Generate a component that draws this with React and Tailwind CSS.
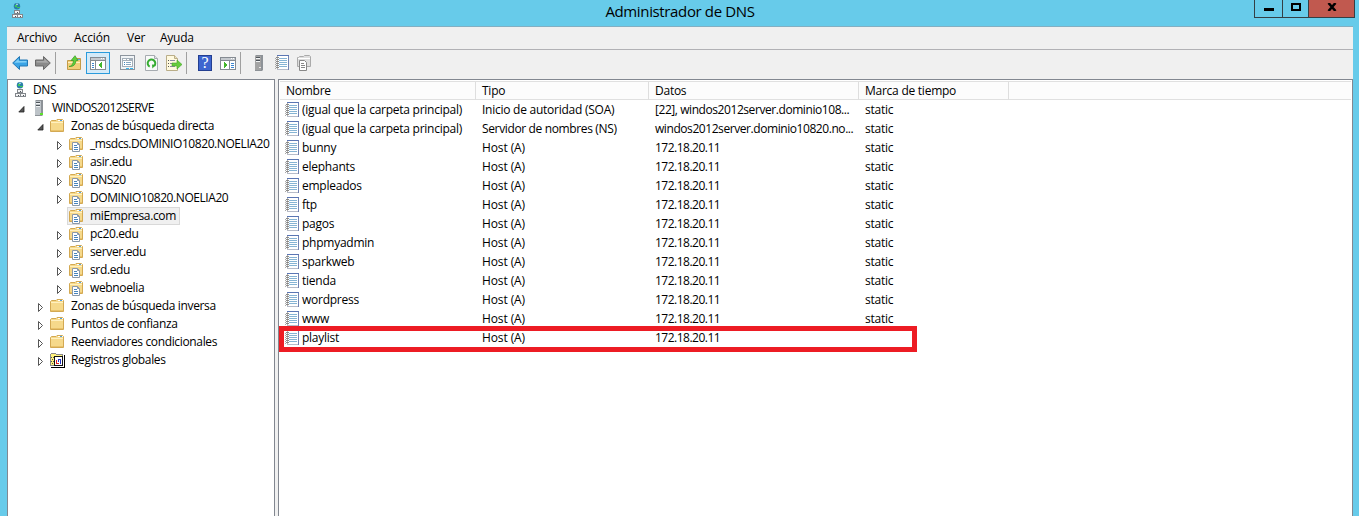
import React from "react";

const Svg = ({ className = "", children, w = 16, h = 16 }) => (
  <svg width={w} height={h} viewBox={`0 0 ${w} ${h}`} className={`block shrink-0 ${className}`}>
    {children}
  </svg>
);

const DnsIcon = () => (
  <Svg>
    <circle cx="7" cy="3.200" r="3.200" fill="#2a7fa8" />
    <path d="M5 2h2v2H5zM7 4h3v1H7z" fill="#3fc75a" />
    <path d="M6 0.800h2v1H6z" fill="#b8e4f5" />
    <g shapeRendering="crispEdges">
      <path d="M4 7h6v4H4zM2 11h6v4H2zM7 11h6v4H7z" fill="#83878c" />
      <path d="M5 8h4v2H5zM3 12h4v2H3zM8 12h4v2H8z" fill="#f4f5f6" />
      <path d="M7 9h1v1H7zM5 13h1v1H5zM10 13h1v1h-1z" fill="#50555a" />
    </g>
  </Svg>
);

const ServerIcon = ({ light }) => (
  <Svg>
    <path d="M4 1l1-1h7v15l-1 1H4z" fill="#8d9297" />
    <path d="M4 1h6v14H4z" fill={light ? "#bdc3c8" : "#a3a3a3"} />
    <path d="M5 2h4v1H5zM5 5h4v1H5z" fill="#4f555b" />
    <path d="M5 3h4v1H5zM5 6h4v1H5z" fill="#f2f4f5" />
    {light ? <path d="M9 13h3v2H9z" fill="#5ee02c" /> : <path d="M8 12h2v1H8z" fill="#e8e8e8" />}
  </Svg>
);

const FolderBody = () => (
  <>
    <path d="M1.500 3.500L2.500 2.500H7L8 1.500H13.500L14.500 2.500V13.500H1.500z" fill="#f6d98b" stroke="#d3a953" />
    <path d="M2 4.500h12" stroke="#fff0bf" />
    <path d="M9 2h5v1H9z" fill="#fff" />
    <path d="M11 2h2v1h-2z" fill="#519fe0" />
    <path d="M2 12h12v1H2z" fill="#e9c26b" />
  </>
);

const FolderIcon = () => (
  <Svg><FolderBody /></Svg>
);

const ZoneIcon = () => (
  <Svg>
    <FolderBody />
    <path d="M4.500 6.500h5l2 2v7h-7z" fill="#fff" stroke="#8b98a8" />
    <path d="M9.500 6.500v2h2" fill="none" stroke="#8b98a8" />
    <path d="M6 9h3v1H6zM6 11h4v1H6zM6 13h4v1H6z" fill="#4784bd" />
  </Svg>
);

const LogsIcon = () => (
  <Svg>
    <g shapeRendering="crispEdges">
      <path d="M1 2h1V1h5v1h7v12H1z" fill="#8a8a8a" />
      <path d="M2 2h5v1h6v10H2z" fill="#fff27a" />
      <path d="M15 3h1v13H2v-1h13z" fill="#000" />
      <path d="M5 5h9v9H5z" fill="#fff" />
      <path d="M5 4h9v1H5zM5 5h1v9H5zM13 5h1v9h-1zM5 13h9v1H5z" fill="#111" />
      <path d="M2 5h1v1H2zM4 5h1v1H4zM3 7h1v1H3zM2 9h1v1H2zM4 9h1v1H4zM3 11h1v1H3z" fill="#555" />
      <path d="M7 8h1v4H7zM8 11h2v1H8z" fill="#e02020" />
      <path d="M9 7h3v1H9zM11 8h1v4h-1zM9 8h1v2H9z" fill="#2035c8" />
    </g>
  </Svg>
);

const RecordIcon = () => (
  <Svg>
    <g shapeRendering="crispEdges">
      <path d="M3 1h12v14H3z" fill="#fff" />
      <path d="M3 0h12v1H3z" fill="#5b76b4" />
      <path d="M14 1h1v14h-1z" fill="#7182b2" />
      <path d="M3 14h11v1H3z" fill="#b7bcc9" />
      <path d="M3 1h1v13H3z" fill="#b0b0b0" />
      <path d="M5 3h8v1H5zM5 5h8v1H5zM5 7h8v1H5zM5 9h8v1H5zM5 11h8v1H5z" fill="#86b4d4" />
      <path d="M2 2h3v1H2zM2 4h3v1H2zM2 6h3v1H2zM2 8h3v1H2zM2 10h3v1H2zM2 12h3v1H2z" fill="#8a8a8a" />
      <path d="M1 3h1v1H1zM1 5h1v1H1zM1 7h1v1H1zM1 9h1v1H1zM1 11h1v1H1zM1 13h1v1H1z" fill="#aaa" />
    </g>
  </Svg>
);

const BackIcon = () => (
  <Svg>
    <path d="M0.700 8L7.500 1.500V5H15.500V11H7.500V14.500z" fill="#3aa4e6" stroke="#2478b5" />
    <path d="M2.300 7.800L6.700 3.700V6H14.500V7.500z" fill="#82d0f7" />
  </Svg>
);

const ForwardIcon = () => (
  <Svg>
    <path d="M15.300 8L8.500 1.500V5H0.500V11H8.500V14.500z" fill="#8a8a8a" stroke="#686868" />
    <path d="M13.700 7.800L9.300 3.700V6H1.500V7.500z" fill="#aaa" />
  </Svg>
);

const UpIcon = () => (
  <Svg>
    <path d="M1.500 5.500H7L8 3.500h6.500v11h-13z" fill="#f2cf78" stroke="#c39a48" />
    <path d="M2 7h12v1H2z" fill="#fff0bd" />
    <path d="M11 4h3v1h-3z" fill="#62a4d8" />
    <path d="M3 11.500Q7 11 7.500 5.500H5L9 0.700L12 5.500H10Q9.500 12 3 11.500z" fill="#5fd13b" stroke="#3a9a26" strokeWidth=".7" />
  </Svg>
);

const PaneIcon = ({ right }) => (
  <Svg>
    <g shapeRendering="crispEdges">
      <path d="M0 2h16v13H0z" fill="#858b92" />
      <path d="M1 3h14v2H1z" fill="#c5c9ce" />
      <path d="M11 3h1v1h-1zM13 3h1v1h-1z" fill="#fff" />
      <path d="M1 6h14v8H1z" fill="#fff" />
      {right ? (
        <>
          <path d="M9 6h1v8H9z" fill="#858b92" />
          <path d="M11 8h3v1h-3zM11 10h3v1h-3zM11 12h3v1h-3z" fill="#3e87d0" />
          <path d="M4 7h1v1h1v1h1v2H6v1H5v1H4z" fill="#43b62c" />
        </>
      ) : (
        <>
          <path d="M5 6h1v8H5z" fill="#858b92" />
          <path d="M2 8h2v1H2zM2 10h2v1H2zM2 12h2v1H2z" fill="#3e87d0" />
          <path d="M11 7h1v6h-1v-1h-1v-1H9V9h1V8h1z" fill="#43b62c" />
        </>
      )}
    </g>
  </Svg>
);

const PropertiesIcon = () => (
  <Svg>
    <g shapeRendering="crispEdges">
      <path d="M1 0h15v15H1z" fill="#8d959e" />
      <path d="M2 1h13v13H2z" fill="#f1f4f6" />
      <path d="M3 3h11v9H3z" fill="#a4afb9" />
      <path d="M4 4h3v1H4zM8 4h2v1H8zM4 6h9v5H4z" fill="#fff" />
      <path d="M5 7h1v1H5zM5 9h1v1H5z" fill="#3c83ba" />
      <path d="M7 7h5v1H7zM7 9h5v1H7z" fill="#85a7c2" />
      <path d="M7 13h3v1H7zM11 13h3v1h-3z" fill="#35b4ed" />
    </g>
  </Svg>
);

const RefreshIcon = () => (
  <Svg>
    <path d="M1.500 0.500h9l3 3v12h-12z" fill="#f8faf8" stroke="#a6abb0" />
    <path d="M10.500 0.500v3h3" fill="#dfe3e6" stroke="#a6abb0" />
    <path d="M5.700 11.700A3.800 3.800 0 1 1 10.200 11" fill="none" stroke="#35ac30" strokeWidth="2" />
    <path d="M8 9.500L12 9.800L8.400 13.500z" fill="#35ac30" />
  </Svg>
);

const ExportIcon = () => (
  <Svg>
    <path d="M0.500 0.500h8l3 3v12h-11z" fill="#fff9df" stroke="#b9ad88" />
    <path d="M8.500 0.500v3h3" fill="#f0e5b9" stroke="#b9ad88" />
    <path d="M2 5h1v1H2zM2 8h1v1H2zM2 11h1v1H2z" fill="#555" />
    <path d="M4 5h5v1H4zM4 8h4v1H4zM4 11h5v1H4z" fill="#8b88a5" />
    <path d="M6 8h5V5l5 4.500L11 14v-3H6z" fill="#65cb3d" stroke="#43a62a" strokeWidth=".6" />
  </Svg>
);

const HelpIcon = () => (
  <div className="flex h-4 w-[14px] shrink-0 items-center justify-center border border-[#243f91] bg-[#3d65cf] font-['Liberation_Serif',serif] text-[16px] leading-none text-white">
    ?
  </div>
);

const ZonesGrayIcon = () => (
  <Svg>
    <path d="M1.500 2.500h1l1-1h4l1-1h5l1 1v10h-13z" fill="#dedede" stroke="#aaa" />
    <path d="M2 3.500h12" stroke="#fff" />
    <path d="M3.500 5.500h5l2 2v8h-7z" fill="#fff" stroke="#888" />
    <path d="M5 8h3v1H5zM5 10h4v1H5zM5 12h4v1H5z" fill="#888" />
  </Svg>
);

const Divider = () => <div className="-mt-px ml-1 h-[22px] w-px shrink-0 bg-[#a0a0a0]" />;

const Expander = ({ open }) => (
  <Svg w={7} h={10}>
    {open ? (
      <path d="M6 2.500V8H0.800z" fill="#555" stroke="#222" strokeWidth=".8" />
    ) : (
      <path d="M1.500 1.500L5.500 5.500L1.500 9.500z" fill="#fff" stroke="#555" />
    )}
  </Svg>
);

const indents = ["pl-[5px]", "pl-[10px]", "pl-[29px]", "pl-12"];
const treeIcons = { dns: DnsIcon, server: () => <ServerIcon light />, folder: FolderIcon, zone: ZoneIcon, logs: LogsIcon };

const tree = [
  [0, "dns", "DNS", null],
  [1, "server", "WINDOS2012SERVE", true, "tracking-[-0.55px]"],
  [2, "folder", "Zonas de búsqueda directa", true],
  [3, "zone", "_msdcs.DOMINIO10820.NOELIA20", false, "tracking-[-0.43px]"],
  [3, "zone", "asir.edu", false],
  [3, "zone", "DNS20", false, "tracking-[-0.5px]"],
  [3, "zone", "DOMINIO10820.NOELIA20", false, "tracking-[-0.43px]"],
  [3, "zone", "miEmpresa.com", null],
  [3, "zone", "pc20.edu", false],
  [3, "zone", "server.edu", false],
  [3, "zone", "srd.edu", false],
  [3, "zone", "webnoelia", false],
  [2, "folder", "Zonas de búsqueda inversa", false],
  [2, "folder", "Puntos de confianza", false],
  [2, "folder", "Reenviadores condicionales", false],
  [2, "logs", "Registros globales", false],
];

function TreeRow({ level, icon, label, open, tracking = "tracking-[-0.35px]" }) {
  const Icon = treeIcons[icon];
  const selected = label === "miEmpresa.com";
  return (
    <div className={`flex h-[18px] items-center ${indents[level]}`}>
      {level > 0 && (
        <div className={`flex shrink-0 items-center pt-0.5 ${level > 1 ? "w-3" : "w-[13px]"}`}>{open !== null && <Expander open={open} />}</div>
      )}
      <div className={`flex h-[18px] items-center ${selected ? "-ml-px w-[113px] bg-[#f0f0f0] outline outline-1 -outline-offset-1 outline-[#d9d9d9]" : ""}`}>
        <div className={selected ? "ml-px" : ""}><Icon /></div>
        <span className={`whitespace-nowrap ${level === 0 ? "ml-1" : level === 1 ? "ml-[5px]" : "ml-[6px]"} ${tracking}`}>{label}</span>
      </div>
    </div>
  );
}

const host = (name, stamp = "static") => [name, "Host (A)", "172.18.20.11", stamp];
const records = [
  ["(igual que la carpeta principal)", "Inicio de autoridad (SOA)", "[22], windos2012server.dominio108...", "static"],
  ["(igual que la carpeta principal)", "Servidor de nombres (NS)", "windos2012server.dominio10820.no...", "static"],
  ...["bunny", "elephants", "empleados", "ftp", "pagos", "phpmyadmin", "sparkweb", "tienda", "wordpress", "www"].map((n) => host(n)),
  host("playlist", ""),
];

const columns = "grid grid-cols-[195px_173px_210px_150px]";

export default function App() {
  return (
    <div className="flex h-[516px] w-[1359px] flex-col overflow-hidden bg-[#67cbea] font-['Open_Sans','Noto_Sans',sans-serif] text-[12px] leading-[18px] tracking-[-0.25px] text-black">
      <header className="flex h-[26px] shrink-0">
        <div className="w-[200px] pt-[3px] pl-[10px]"><DnsIcon /></div>
        <h1 className="flex-1 pt-[2px] pr-[94px] text-center text-[15px] font-normal tracking-[-0.36px]">Administrador de DNS</h1>
        <div className="mr-1 flex h-[18px] w-[101px] border-x border-b border-[#343f45]">
          <div className="flex w-[28px] justify-center border-r border-[#343f45] pt-2"><div className="h-[3px] w-[10px] bg-black" /></div>
          <div className="flex w-[26px] justify-center border-r border-[#343f45] pt-[3px]"><div className="h-2 w-[10px] border-2 border-black" /></div>
          <div className="flex flex-1 justify-center bg-[#c1594f] pt-[3px]">
            <Svg w={10} h={8}><path d="M1.500 0L8.500 8M8.500 0L1.500 8" stroke="#000" strokeWidth="2.500" /></Svg>
          </div>
        </div>
      </header>

      <main className="mr-[6px] ml-[7px] flex min-h-0 flex-1 flex-col border-t border-[#83afc2] bg-[#f0f0f0]">
        <nav className="flex h-[23px] shrink-0 border-b border-[#b1b1b5] pt-[2px] pl-[10px]">
          <span className="w-[57px]">Archivo</span>
          <span className="w-[53px] tracking-[-0.1px]">Acción</span>
          <span className="w-[33px]">Ver</span>
          <span>Ayuda</span>
        </nav>
        <div className="flex h-[29px] shrink-0 items-center pb-[3px] pl-[5px]">
          <BackIcon />
          <div className="ml-[7px]"><ForwardIcon /></div>
          <Divider />
          <div className="ml-[10px]"><UpIcon /></div>
          <div className="ml-1 flex h-[22px] w-6 items-center justify-center border border-[#2a9bdc] bg-[#d4eaf8]"><PaneIcon /></div>
          <div className="ml-[9px]"><PropertiesIcon /></div>
          <div className="ml-[9px]"><RefreshIcon /></div>
          <div className="ml-[6px]"><ExportIcon /></div>
          <Divider />
          <div className="mr-px ml-[11px]"><HelpIcon /></div>
          <div className="ml-[7px]"><PaneIcon right /></div>
          <Divider />
          <div className="ml-[10px]"><ServerIcon /></div>
          <div className="ml-[7px]"><RecordIcon /></div>
          <div className="ml-[6px]"><ZonesGrayIcon /></div>
        </div>

        <div className="flex min-h-0 flex-1">
          <aside className="w-[268px] shrink-0 border-x border-t border-[#828790] bg-white pt-px">
            {tree.map(([level, icon, label, open, tracking]) => (
              <TreeRow key={label} level={level} icon={icon} label={label} open={open} tracking={tracking} />
            ))}
          </aside>
          <section className="ml-[3px] flex-1 border-x border-t border-[#828790] bg-white">
            <div className="mx-px mt-px h-[19px] border-t border-b border-[#e0e0e0] bg-[#fcfcfc]">
              <div className="grid h-full w-[729px] grid-cols-[196px_173px_210px_150px] leading-[18px]">
                {["Nombre", "Tipo", "Datos", "Marca de tiempo"].map((title) => (
                  <div key={title} className="-ml-px border-r border-[#dedede] pl-[7px]">{title}</div>
                ))}
              </div>
            </div>
            <div className="pt-px">
              {records.map(([name, type, data, stamp], i) => (
                <div key={i} className={`${columns} relative h-[19px] w-[730px] pl-px leading-[17px]`}>
                  <div className="flex pl-1">
                    <div className="pt-px"><RecordIcon /></div>
                    <span className="ml-[2px] whitespace-nowrap">{name}</span>
                  </div>
                  <div className={`pl-[7px] whitespace-nowrap ${type.includes("NS") ? "tracking-[-0.36px]" : type.includes("Host") ? "tracking-[-0.1px]" : ""}`}>{type}</div>
                  <div className={`pl-[7px] whitespace-nowrap ${data.length < 15 ? "tracking-[-0.5px]" : "tracking-[-0.43px]"}`}>{data}</div>
                  <div className="pl-[7px]">{stamp}</div>
                  {name === "playlist" && <div className="absolute -top-[3px] left-0 h-[26px] w-[638px] border-[5px] border-[#ed1c24]" />}
                </div>
              ))}
            </div>
          </section>
        </div>
      </main>
    </div>
  );
}
